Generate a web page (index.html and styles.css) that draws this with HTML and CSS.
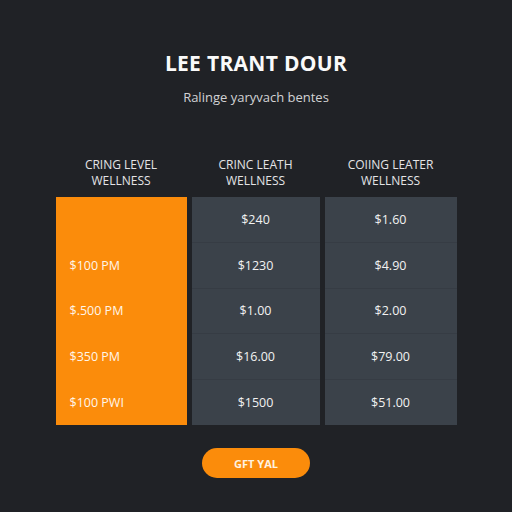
FILE: index.html
```html
<!DOCTYPE html>
<html>
<head>
<meta charset="utf-8">
<link rel="stylesheet" href="styles.css">
</head>
<body>
<main class="page">
  <h1 class="title">LEE TRANT DOUR</h1>
  <p class="subtitle">Ralinge yaryvach bentes</p>
  <div class="heads">
    <div class="head">CRING LEVEL<br>WELLNESS</div>
    <div class="head">CRINC LEATH<br>WELLNESS</div>
    <div class="head">COIING LEATER<br>WELLNESS</div>
  </div>
  <div class="table">
    <div class="col col-main">
      <div class="cell"></div>
      <div class="cell">$100 PM</div>
      <div class="cell">$.500 PM</div>
      <div class="cell">$350 PM</div>
      <div class="cell">$100 PWI</div>
    </div>
    <div class="col col-alt">
      <div class="cell">$240</div>
      <div class="cell">$1230</div>
      <div class="cell">$1.00</div>
      <div class="cell">$16.00</div>
      <div class="cell">$1500</div>
    </div>
    <div class="col col-alt col-last">
      <div class="cell">$1.60</div>
      <div class="cell">$4.90</div>
      <div class="cell">$2.00</div>
      <div class="cell">$79.00</div>
      <div class="cell">$51.00</div>
    </div>
  </div>
  <div class="cta-row"><button class="cta">GFT YAL</button></div>
</main>
</body>
</html>
```

FILE: styles.css
```css
html, body {
  margin: 0;
  padding: 0;
  background: #202226;
}
body {
  width: 512px;
  height: 512px;
  font-family: "Open Sans", "Liberation Sans", sans-serif;
  color: #fff;
}
.page {
  display: flex;
  flex-direction: column;
  align-items: center;
  padding-top: 50px;
}
.title {
  margin: 0;
  font-size: 21px;
  font-weight: 700;
  line-height: 26px;
  letter-spacing: 0.3px;
  color: #fafafa;
}
.subtitle {
  margin: 12px 0 0;
  font-size: 13px;
  line-height: 18px;
  color: #d2d2d4;
}
.heads {
  margin-top: 51px;
  display: grid;
  grid-template-columns: 131px 128px 132px;
  column-gap: 5px;
  width: 401px;
}
.head {
  text-align: center;
  font-size: 12px;
  line-height: 16px;
  color: #e4e4e6;
}
.table {
  margin-top: 8px;
  display: grid;
  grid-template-columns: 131px 128px 132px;
  column-gap: 5px;
  width: 401px;
  height: 228px;
}
.col {
  display: flex;
  flex-direction: column;
}
.col-main {
  background: #fb8c0b;
}
.col-alt {
  background: #3b424a;
}
.cell {
  flex: 1;
  display: flex;
  align-items: center;
  justify-content: center;
  font-size: 12.5px;
  color: #f2f2f2;
}
.col-alt .cell + .cell {
  border-top: 1px solid #363c44;
}
.col-main .cell {
  justify-content: flex-start;
  padding-left: 14px;
  color: #fff6ea;
}
.cta-row {
  margin-top: 23px;
}
.cta {
  width: 108px;
  height: 30px;
  border: none;
  border-radius: 15px;
  background: #fb8c0b;
  color: #fff3e0;
  font-family: "Open Sans", "Liberation Sans", sans-serif;
  font-weight: 700;
  font-size: 11px;
}
```
